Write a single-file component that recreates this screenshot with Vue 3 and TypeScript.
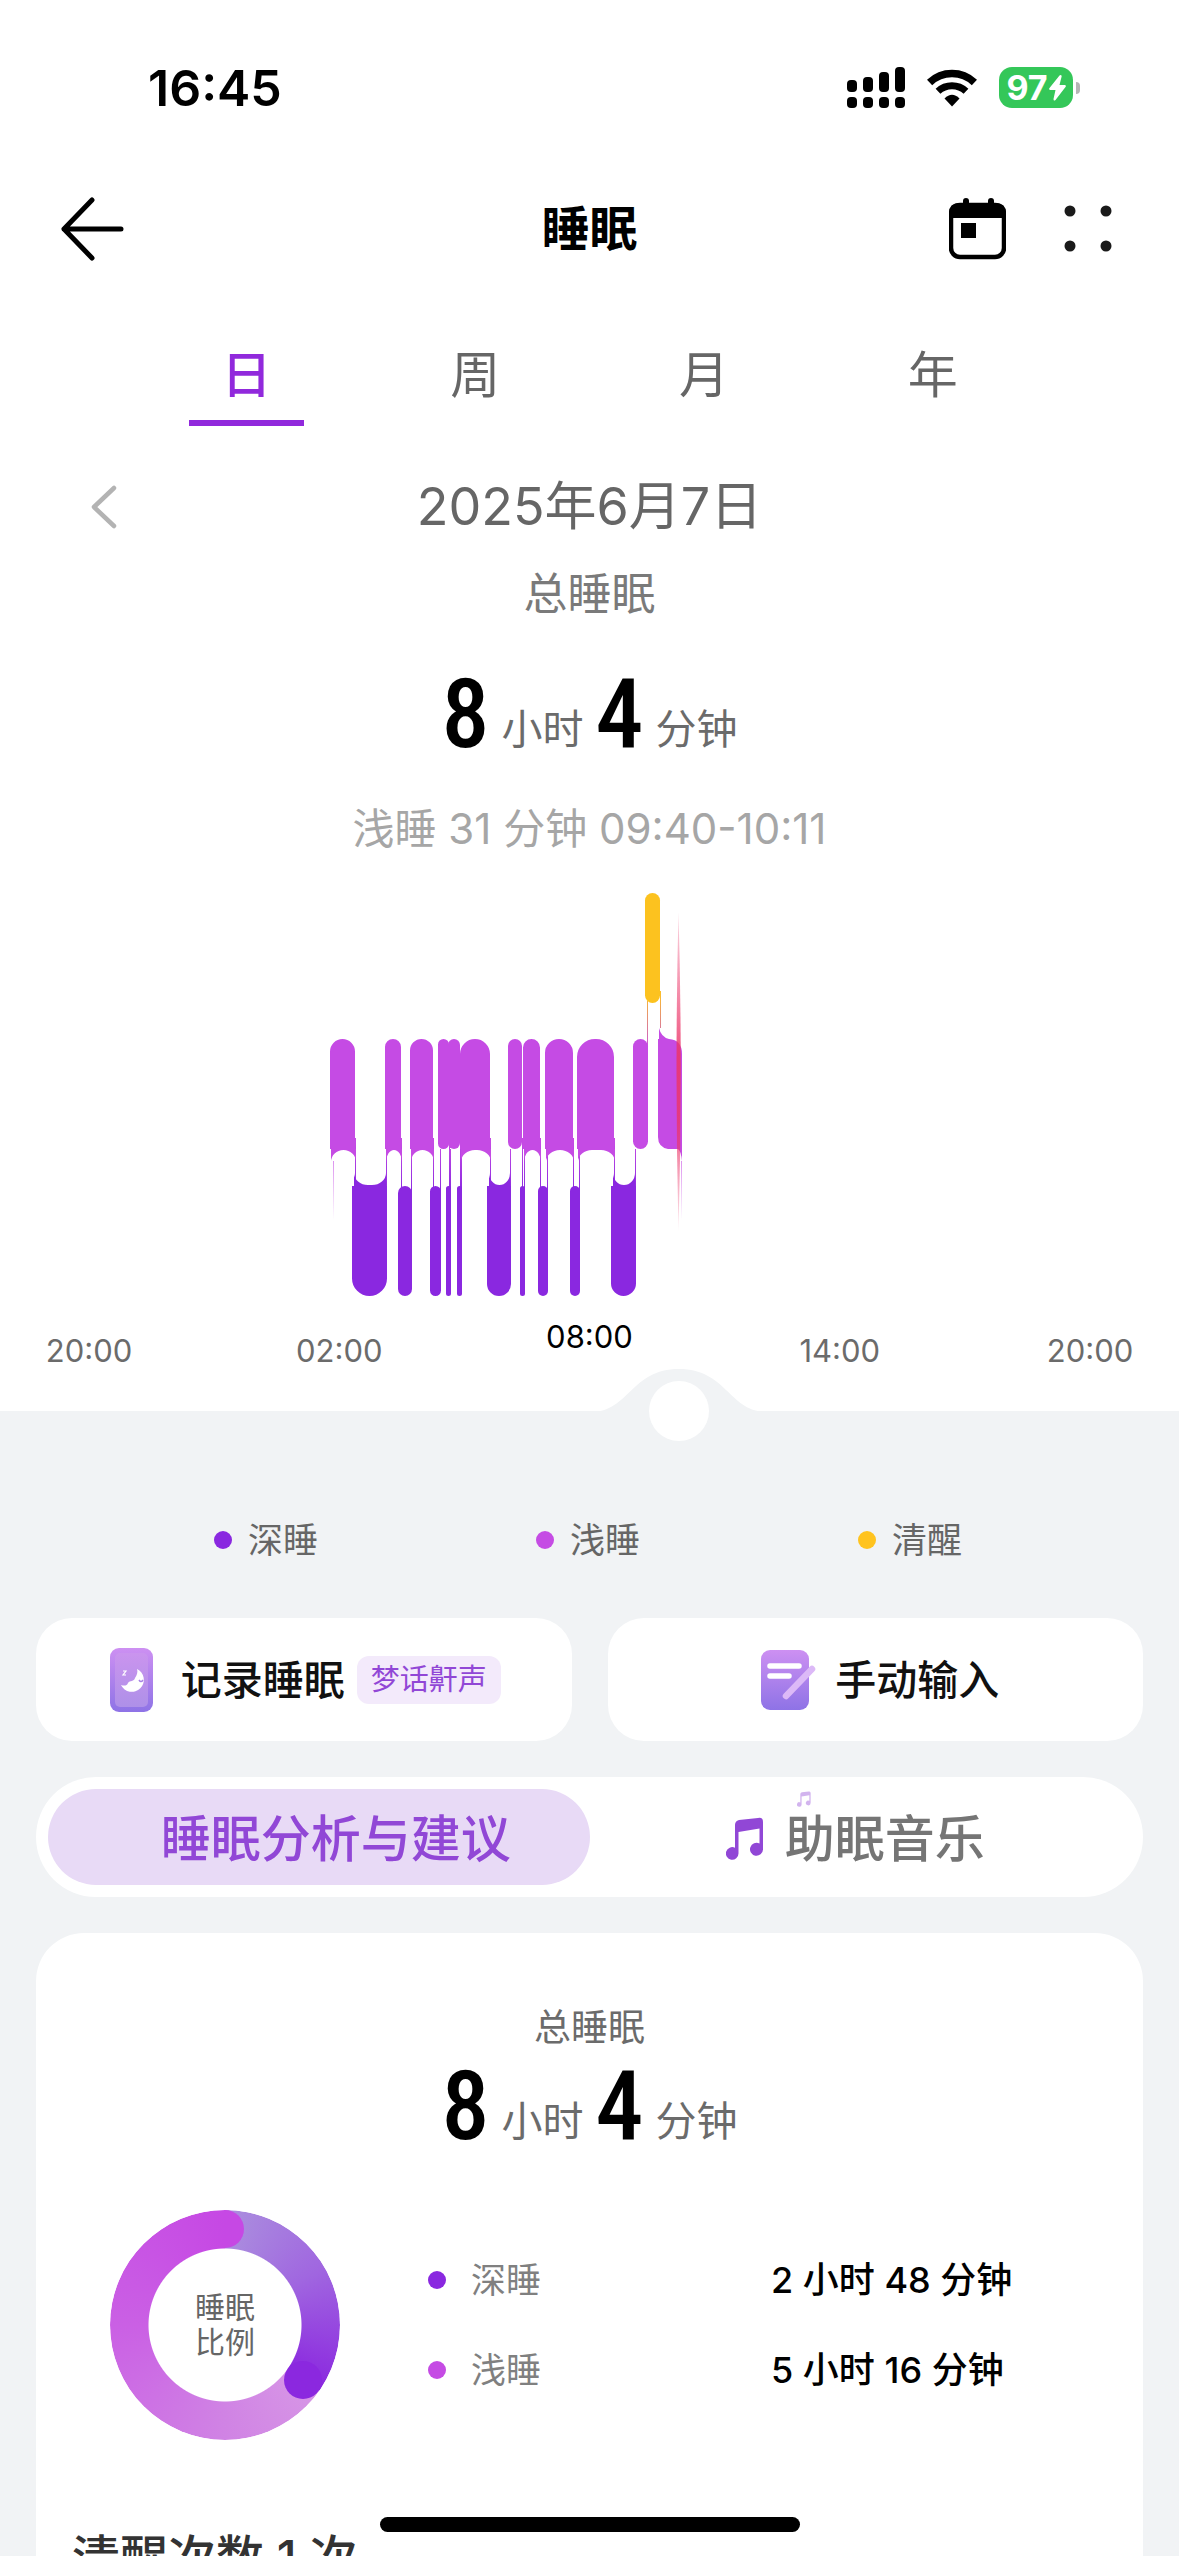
<script setup lang="ts">
import { ref, computed } from 'vue'

type Span = [number, number]
interface Link { x: number; y1: number; y2: number; tone: string }

const tabs = ['日', '周', '月', '年']
const activeTab = ref(0)

const hours = ['20:00', '02:00', '08:00', '14:00', '20:00']

const stages = [
  { name: '深睡', color: '#8a28e0' },
  { name: '浅睡', color: '#c54be4' },
  { name: '清醒', color: '#ffc31f' },
]

const totals = [
  { name: '深睡', color: '#8a28e0', value: '2 小时 48 分钟' },
  { name: '浅睡', color: '#c54be4', value: '5 小时 16 分钟' },
]

// Chart geometry, in the units of the chart's viewBox
const light: Span[] = [
  [330, 355], [385, 401], [410, 433], [438, 449], [448, 460], [460, 490],
  [508, 522], [523, 540], [545, 573], [577, 614], [633, 648],
]
const deep: Span[] = [
  [352, 387], [398, 412], [430, 441], [446, 451], [457, 462], [487, 511],
  [520, 525], [538, 548], [570, 580], [611, 636],
]
const LIGHT_TOP = 159
const LIGHT_END = 269
const DEEP_TOP = 306
const DEEP_END = 416
const CURVE = 12

const wide = (s: Span) => s[1] - s[0] > 15

function lightPath(s: Span): string {
  const [a, b] = s
  const r = Math.min((b - a) / 2, 18)
  if (!wide(s)) {
    return `M${a} ${LIGHT_TOP + r}A${r} ${r} 0 0 1 ${b} ${LIGHT_TOP + r}V${LIGHT_END - r}A${r} ${r} 0 0 1 ${a} ${LIGHT_END - r}Z`
  }
  const c = Math.min(14, (b - a) / 2)
  return `M${a} ${LIGHT_TOP + r}A${r} ${r} 0 0 1 ${a + r} ${LIGHT_TOP}H${b - r}A${r} ${r} 0 0 1 ${b} ${LIGHT_TOP + r}V${LIGHT_END}` +
    `h1v13A${c} ${CURVE} 0 0 0 ${b + 1 - c} ${LIGHT_END + 1}H${a + 1 + c}A${c} ${CURVE} 0 0 0 ${a + 1} ${LIGHT_END + 13}V${LIGHT_END}h-1Z`
}

function deepPath(s: Span): string {
  const [a, b] = s
  const r = (b - a) / 2
  if (!wide(s)) {
    return `M${a} ${DEEP_TOP + r}A${r} ${r} 0 0 1 ${b} ${DEEP_TOP + r}V${DEEP_END - r}A${r} ${r} 0 0 1 ${a} ${DEEP_END - r}Z`
  }
  const c = Math.min(14, (b - a - 3) / 2)
  return `M${a} ${DEEP_TOP}h2v-13A${c} ${CURVE} 0 0 0 ${a + 2 + c} ${DEEP_TOP - 1}H${b - 1 - c}A${c} ${CURVE} 0 0 0 ${b - 1} ${DEEP_TOP - 13}V${DEEP_TOP}h1V${DEEP_END - r}A${r} ${r} 0 0 1 ${a} ${DEEP_END - r}Z`
}

const links: Link[] = [
  ...[355, 401, 433, 449, 460, 490, 522, 540, 573, 614].map((x) => ({ x, y1: 258, y2: 308, tone: 'url(#fall)' })),
  ...[387, 412, 441, 451, 462, 511, 525, 548, 580, 636].map((x) => ({ x: x - 1, y1: 269, y2: 318, tone: 'url(#fall)' })),
  { x: 647, y1: 121, y2: 172, tone: 'url(#wake)' },
  { x: 660, y1: 111, y2: 148, tone: 'url(#wake)' },
]

// Minutes after 20:00 that the cursor stands on
const minute = ref(849)
const cursorLeft = computed(() => `calc(90px + (100% - 180px) * ${minute.value / 1440})`)

const NOTE = 'M9 7Q9 3 13 2L32 0Q37 -1 37 4V31.500A6.500 6.500 0 1 1 33.500 25.500V10.500L12.500 14V35.500A6.300 6.300 0 1 1 9 29.800Z'
</script>

<template>
  <div class="screen">
    <div class="status">
      <span class="clock">16:45</span>
      <div class="status-icons">
        <svg width="58" height="41" viewBox="0 0 58 41" aria-hidden="true">
          <rect x="0" y="13" width="10" height="12" rx="4" /><rect x="16" y="10" width="10" height="15" rx="4" />
          <rect x="32" y="5" width="10" height="20" rx="4" /><rect x="48" y="0" width="10" height="25" rx="4" />
          <rect v-for="x in [0, 16, 32, 48]" :key="x" :x="x" y="30" width="10" height="11" rx="4" />
        </svg>
        <svg width="50" height="38" viewBox="0 0 50 38" aria-hidden="true">
          <path d="M2.600 13.500A32.500 32.500 0 0 1 47.400 13.500" fill="none" stroke="#000" stroke-width="7.500" />
          <path d="M11 22.300A20.500 20.500 0 0 1 39 22.300" fill="none" stroke="#000" stroke-width="7" />
          <path d="M25 37.500L17.500 29.500Q25 22 32.500 29.500Z" />
        </svg>
        <div class="battery">
          <span class="charge">97<svg width="17" height="26" viewBox="0 0 17 26" aria-hidden="true"><path d="M11.500 0Q13 0 12.500 2L10.500 10H16Q17.500 10.500 16.500 12L6.500 25Q4.500 26.500 4.500 24L6.500 15H1Q-.5 14.500 .5 13L10.500 .5Z" fill="#fff" /></svg></span>
          <i class="nub"></i>
        </div>
      </div>
    </div>

    <header class="bar">
      <button class="icon-btn" type="button" aria-label="返回">
        <svg width="66" height="64" viewBox="0 0 66 64" fill="none" stroke="#000" stroke-width="5" stroke-linecap="round" stroke-linejoin="round"><path d="M32 3L4 32L32 61M4 32H61" /></svg>
      </button>
      <h1>睡眠</h1>
      <div class="actions">
        <button class="icon-btn" type="button" aria-label="日历">
          <svg width="57" height="62" viewBox="0 0 57 62">
            <rect x="2" y="7" width="53" height="52" rx="9" fill="none" stroke="#000" stroke-width="4.500" />
            <path d="M0 20V15Q0 5 10 5H47Q57 5 57 15V20Z" />
            <rect x="14" y="0" width="6" height="12" rx="3" /><rect x="39" y="0" width="6" height="12" rx="3" />
            <rect x="12" y="25" width="15" height="15" />
          </svg>
        </button>
        <button class="icon-btn" type="button" aria-label="更多">
          <svg width="59" height="56" viewBox="0 0 59 56" fill="#1a1a1a"><circle cx="10" cy="10" r="5.500" /><circle cx="46" cy="10" r="5.500" /><circle cx="10" cy="45" r="5.500" /><circle cx="46" cy="45" r="5.500" /></svg>
        </button>
      </div>
    </header>

    <nav class="tabs">
      <button v-for="(t, i) in tabs" :key="t" type="button" class="tab" :class="{ on: i === activeTab }" @click="activeTab = i">{{ t }}</button>
    </nav>

    <div class="date-row">
      <button class="icon-btn" type="button" aria-label="前一天">
        <svg width="28" height="44" viewBox="0 0 28 44" fill="none" stroke="#b3b3b3" stroke-width="4.500" stroke-linecap="round" stroke-linejoin="round"><path d="M24 3L4 22L24 41" /></svg>
      </button>
      <span class="date">2025年6月7日</span>
    </div>
    <p class="caption">总睡眠</p>
    <p class="total"><b>8</b><span>小时</span><b>4</b><span>分钟</span></p>
    <p class="detail">浅睡 31 分钟 09:40-10:11</p>

    <svg class="chart" viewBox="0 0 1179 430" role="img" aria-label="睡眠阶段图">
      <defs>
        <linearGradient id="fall" gradientUnits="userSpaceOnUse" x1="0" y1="262" x2="0" y2="312"><stop offset="0" stop-color="#c54be4" /><stop offset="1" stop-color="#8a28e0" /></linearGradient>
        <linearGradient id="wake" gradientUnits="userSpaceOnUse" x1="0" y1="115" x2="0" y2="172"><stop offset="0" stop-color="#fbbd2c" /><stop offset="1" stop-color="#c54be4" /></linearGradient>
        <linearGradient id="tail" gradientUnits="userSpaceOnUse" x1="0" y1="281" x2="0" y2="340"><stop offset="0" stop-color="#c54be4" stop-opacity=".6" /><stop offset="1" stop-color="#c54be4" stop-opacity="0" /></linearGradient>
        <linearGradient id="cursor" x1="0" y1="0" x2="0" y2="1"><stop offset="0" stop-color="#ec3568" stop-opacity=".2" /><stop offset=".45" stop-color="#ec3568" stop-opacity=".85" /><stop offset=".65" stop-color="#ec3568" stop-opacity=".8" /><stop offset="1" stop-color="#ec3568" stop-opacity=".1" /></linearGradient>
      </defs>
      <rect v-for="(l, i) in links" :key="'k' + i" :x="l.x" :y="l.y1" width="1" :height="l.y2 - l.y1" :fill="l.tone" />
      <path v-for="(s, i) in deep" :key="'d' + i" :d="deepPath(s)" fill="#8a28e0" />
      <path v-for="(s, i) in light" :key="'l' + i" :d="lightPath(s)" fill="#c54be4" />
      <rect x="645" y="13" width="15" height="110" rx="7.500" fill="#fcc21f" />
      <path d="M658 159H659V148Q661 157 669 159Q682 160 682 174V281Q681 271 678 269H668Q658 267 658 257Z" fill="#c54be4" />
      <rect x="333" y="281" width="1" height="59" fill="url(#tail)" />
      <rect x="681" y="281" width="1" height="59" fill="url(#tail)" />
      <path d="M678.500 32Q683 190 678.500 352Q674.500 190 678.500 32Z" fill="url(#cursor)" />
    </svg>

    <div class="hours">
      <span v-for="(h, i) in hours" :key="i" :class="{ now: i === 2 }">{{ h }}</span>
    </div>

    <main class="sheet">
      <svg class="bump" :style="{ left: cursorLeft }" width="176" height="43" viewBox="0 0 176 43" aria-hidden="true"><path d="M0 43C38 43 40 0 88 0S138 43 176 43Z" fill="#f1f3f5" /></svg>
      <input v-model.number="minute" class="cursor" type="range" min="0" max="1440" aria-label="时间">

      <ul class="legend">
        <li v-for="s in stages" :key="s.name"><i class="dot" :style="{ background: s.color }"></i>{{ s.name }}</li>
      </ul>

      <div class="shortcuts">
        <button type="button" class="shortcut">
          <svg width="62" height="64" viewBox="-3 0 62 64" aria-hidden="true">
            <defs><linearGradient id="violet" x1="0" y1="0" x2="0" y2="1"><stop offset="0" stop-color="#cd90f2" /><stop offset="1" stop-color="#8e73e6" /></linearGradient>
              <linearGradient id="glass" x1="0" y1="0" x2="0" y2="1"><stop offset="0" stop-color="#ca94ee" /><stop offset="1" stop-color="#ae90e8" /></linearGradient></defs>
            <rect width="43" height="64" rx="9" fill="url(#violet)" />
            <rect x="5" y="5" width="33" height="54" rx="5" fill="url(#glass)" />
            <path d="M27 21A12 12 0 1 1 11 37C14 38 17 38 18 35C20 32 24 34 25 30C27 27 28 24 27 21Z" fill="#fff" />
            <path d="M29 32q2 3 4 0" fill="none" stroke="#a884e6" stroke-width="1.500" />
            <path d="M13 23h3l-3 4h3" fill="none" stroke="#fff" stroke-width="1.200" />
          </svg>
          <strong>记录睡眠</strong><em>梦话鼾声</em>
        </button>
        <button type="button" class="shortcut">
          <svg width="72" height="60" viewBox="-10 0 72 60" aria-hidden="true">
            <rect width="48" height="60" rx="9" fill="url(#violet)" />
            <path d="M9 16H38M9 26H28" stroke="#fff" stroke-width="5.500" stroke-linecap="round" />
            <path d="M51 19L25 46" stroke="#dcb9f7" stroke-width="6.500" stroke-linecap="round" />
          </svg>
          <strong>手动输入</strong>
        </button>
      </div>

      <div class="segments">
        <button type="button" class="segment on">睡眠分析与建议</button>
        <button type="button" class="segment music">
          <svg width="38" height="43" viewBox="0 -1 38 43" aria-hidden="true"><path :d="NOTE" fill="#9147d6" /></svg>
          <span>助眠音乐<svg class="mini" width="14" height="16" viewBox="0 -1 38 43" aria-hidden="true"><path :d="NOTE" fill="#9147d6" /></svg></span>
        </button>
      </div>

      <section class="card">
        <p class="caption small">总睡眠</p>
        <p class="total"><b>8</b><span>小时</span><b>4</b><span>分钟</span></p>
        <div class="ratio">
          <div class="donut">
            <div class="ring"></div>
            <svg class="caps" viewBox="0 0 230 230" aria-hidden="true">
              <path d="M115 0A19 19 0 0 1 115 38Z" fill="#c648e4" />
              <circle cx="193" cy="170" r="19" fill="#8b28df" />
            </svg>
            <span>睡眠<br>比例</span>
          </div>
          <dl class="totals">
            <div v-for="t in totals" :key="t.name">
              <dt><i class="dot" :style="{ background: t.color }"></i>{{ t.name }}</dt>
              <dd>{{ t.value }}</dd>
            </div>
          </dl>
        </div>
        <h2>清醒次数 1 次</h2>
      </section>
    </main>
    <div class="home"></div>
  </div>
</template>

<style>
body { margin: 0; background: #fff; }
</style>

<style scoped>
.screen {
  position: relative;
  height: 100vh;
  overflow: hidden;
  display: flex;
  flex-direction: column;
  background: #fff;
  color: #000;
  font-family: Inter, "Noto Sans CJK SC", sans-serif;
}
p, h1, h2, ul, dl, dd { margin: 0; padding: 0; }
svg { display: block; flex: none; }
button { border: 0; padding: 0; margin: 0; background: none; font: inherit; color: inherit; cursor: pointer; }

.status { flex: none; height: 175px; padding: 0 99px 0 148px; display: flex; align-items: center; justify-content: space-between; }
.clock { font-size: 50px; font-weight: 600; line-height: 60px; }
.status-icons { display: flex; align-items: center; gap: 22px; }
.battery { display: flex; align-items: center; gap: 3px; }
.charge { display: flex; align-items: center; justify-content: center; gap: 1px; width: 74px; height: 41px; border-radius: 13px; background: #34c759; color: #fff; font-size: 34px; font-weight: 700; line-height: 41px; }
.nub { width: 4px; height: 12px; border-radius: 0 6px 6px 0; background: #b5b5b5; }

.bar { flex: none; height: 108px; padding: 0 60px; display: grid; grid-template-columns: 1fr auto 1fr; align-items: center; }
.bar > .icon-btn { justify-self: start; }
h1 { font-size: 48px; line-height: 72px; font-weight: 600; }
.actions { justify-self: end; display: flex; align-items: center; gap: 54px; }

.tabs { flex: none; margin-top: 56px; padding: 0 132px; display: grid; grid-template-columns: repeat(4, 1fr); }
.tab { display: flex; flex-direction: column; align-items: center; gap: 9px; font-size: 50px; line-height: 72px; color: #666; }
.tab::after { content: ""; width: 50%; height: 6px; }
.tab.on { color: #9129dc; font-weight: 500; }
.tab.on::after { background: #9129dc; }

.date-row { flex: none; margin-top: 45px; padding: 0 90px; height: 72px; display: grid; grid-template-columns: 1fr auto 1fr; align-items: center; }
.date-row .icon-btn { justify-self: start; }
.date { font-size: 52px; line-height: 72px; color: #666; }
.caption { margin-top: 21px; text-align: center; font-size: 44px; line-height: 60px; color: #7a7a7a; }
.total { margin-top: 41px; display: flex; justify-content: center; align-items: flex-end; gap: 12px; }
.total b { font-family: "Roboto Condensed", "Liberation Sans Narrow", Roboto, sans-serif; font-size: 96px; line-height: 98px; font-weight: 500; }
.total span { margin-bottom: 10px; font-size: 41px; line-height: 48px; color: #6b6b6b; }
.detail { margin-top: 36px; text-align: center; font-size: 42px; line-height: 60px; color: #a6a6a6; }

.chart { width: 100%; margin-top: 21px; }
.hours { flex: none; margin-top: 21px; padding: 0 47px; display: flex; justify-content: space-between; font-size: 31px; line-height: 40px; color: #6b6b6b; }
.hours span { width: 84px; display: flex; justify-content: center; }
.hours .now { color: #000; transform: translateY(-14px); }

.sheet { position: relative; flex: none; margin-top: 40px; padding: 103px 36px 0; background: #f1f3f5; }
.bump { position: absolute; top: -42px; transform: translateX(-50%); }
.cursor { position: absolute; left: 60px; right: 60px; top: -30px; width: calc(100% - 120px); height: 60px; margin: 0; appearance: none; background: none; }
.cursor::-webkit-slider-thumb { appearance: none; width: 60px; height: 60px; border-radius: 50%; background: #fff; }

.dot { flex: none; width: 18px; height: 18px; border-radius: 50%; }
.legend { padding: 0 72px 0 69px; display: flex; justify-content: space-around; list-style: none; font-size: 35px; line-height: 52px; color: #666; }
.legend li { display: flex; align-items: center; gap: 16px; }

.shortcuts { margin-top: 52px; display: grid; grid-template-columns: 1fr 1fr; gap: 36px; }
.shortcut { display: flex; align-items: center; justify-content: center; gap: 12px; height: 123px; border-radius: 36px; background: #fff; }
.shortcut strong { font-size: 41px; line-height: 60px; font-weight: 500; color: #111; }
.shortcut em { padding: 0 14px; border-radius: 12px; background: #f3eafb; color: #9147d6; font-size: 29px; font-style: normal; line-height: 48px; }

.segments { margin-top: 36px; padding: 12px; display: grid; grid-template-columns: 1fr 1fr; border-radius: 60px; background: #fff; font-size: 50px; font-weight: 500; color: #757575; }
.segment { height: 96px; border-radius: 48px; padding-top: 3px; line-height: 72px; }
.segment.on { padding-left: 34px; background: #e8daf6; color: #9147d6; }
.segment.music { display: flex; align-items: center; justify-content: center; gap: 21px; padding-right: 10px; }
.music span { position: relative; font-size: 50px; }
.mini { position: absolute; left: 12px; top: -12px; opacity: .4; }

.card { margin-top: 36px; padding: 69px 36px 60px; border-radius: 48px 48px 0 0; background: #fff; }
.caption.small { margin: 0; font-size: 37px; line-height: 52px; color: #6b6b6b; }
.card .total { margin-top: 3px; }
.ratio { margin-top: 55px; padding-left: 38px; display: flex; align-items: center; gap: 88px; }
.donut { position: relative; flex: none; width: 230px; height: 230px; display: grid; place-items: center; font-size: 30px; line-height: 35px; color: #666; text-align: center; }
.ring {
  position: absolute;
  inset: 0;
  border-radius: 50%;
  background: conic-gradient(#ab8fde 0deg, #a066e0 60deg, #8b28df 125deg, #d796e6 125deg, #d083e4 180deg, #ca60e4 270deg, #c648e4 360deg);
  mask: radial-gradient(circle, transparent 76px, #000 77px);
}
.caps { position: absolute; inset: 0; }
.totals { flex: 1; display: grid; gap: 38px; font-size: 35px; line-height: 52px; }
.totals > div { display: grid; grid-template-columns: 343px 1fr; align-items: center; }
.totals dt { display: flex; align-items: center; gap: 25px; color: #808080; }
.totals dd { font-size: 36px; font-weight: 500; }
h2 { margin-top: 84px; font-size: 48px; line-height: 68px; font-weight: 500; color: #333; }

.home { position: absolute; left: 50%; bottom: 24px; width: 420px; height: 15px; border-radius: 8px; background: #000; transform: translateX(-50%); }
</style>
